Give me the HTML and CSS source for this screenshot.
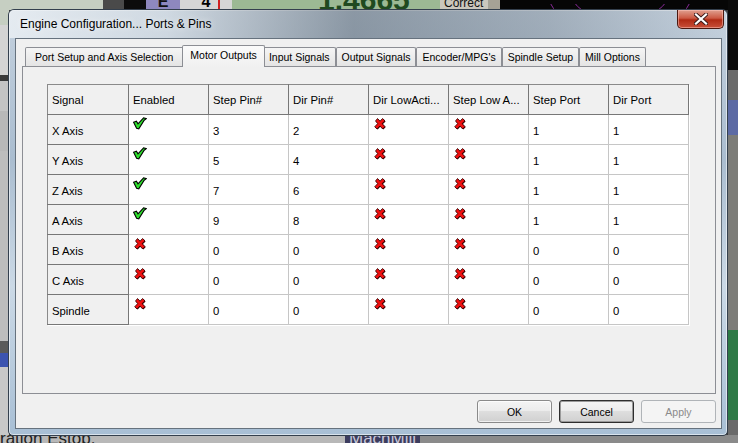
FILE: index.html
```html
<!DOCTYPE html>
<html lang="en">
<head>
    <meta charset="UTF-8">
    <title>Engine Configuration... Ports &amp; Pins</title>
    <link rel="stylesheet" href="styles.css">
</head>
<body>

    <svg class="defs" width="0" height="0">
        <symbol id="ok" viewBox="0 0 14 13">
            <path d="M0.6,5.2 L3.4,4.2 L5,6.8 L10.6,0.8 L13.4,1.6 L11.2,3.2 L5.8,11.8 L3.6,11.2 Z" fill="#2ee02e" stroke="#000" stroke-width="1.1" stroke-linejoin="miter"/>
        </symbol>
        <symbol id="no" viewBox="0 0 13 13">
            <path d="M2,4 L4,1.5 L6.5,4.2 L9,1.5 L11.5,3.8 L8.6,6.6 L11.5,9.6 L9.2,12 L6.4,9 L3.6,12 L1.2,9.8 L4.2,6.6 Z" fill="#3a0000" transform="translate(0.6,0.6)"/>
            <path d="M2,4 L4,1.5 L6.5,4.2 L9,1.5 L11.5,3.8 L8.6,6.6 L11.5,9.6 L9.2,12 L6.4,9 L3.6,12 L1.2,9.8 L4.2,6.6 Z" fill="#f01010" stroke="#2a0000" stroke-width="0.8" stroke-linejoin="round"/>
        </symbol>
    </svg>

    <!-- whatever is behind the dialog -->
    <div class="desk">
        <div class="strip top">
            <span class="seg" style="width:103px;background:#c6cfc2"></span>
            <span class="seg" style="width:21px;background:#4a4a4a"></span>
            <span class="seg" style="width:22px;background:#0c0c0c"></span>
            <span class="seg key" style="width:34px;background:#8e88be">E</span>
            <span class="seg key light" style="width:52px;background:#d6d6d6">4<i class="redline"></i></span>
            <span class="seg big" style="width:208px;background:#9cb994">1.4665</span>
            <span class="seg small" style="width:48px;background:#cbc7bd">Correct</span>
            <span class="seg" style="width:12px;background:#a6a296"></span>
            <span class="seg scope" style="width:238px;background:#060606">
                <svg width="238" height="10"><circle cx="120" cy="-40" r="60" fill="none" stroke="#8a2a9a" stroke-width="1"/><circle cx="120" cy="-40" r="80" fill="none" stroke="#8a2a9a" stroke-width="1"/><line x1="229" y1="0" x2="229" y2="10" stroke="#c02020"/></svg>
            </span>
        </div>
        <div class="strip left">
            <span style="height:15px;background:#c6cfc2"></span>
            <span style="height:50px;background:#d4d4d4"></span>
            <span style="height:6px;background:#3a3a3a"></span>
            <span style="height:30px;background:#c4c4c4"></span>
            <span style="height:40px;background:#b8b8b8"></span>
            <span style="height:190px;background:#bdbdbd"></span>
            <span style="height:12px;background:#5a5a5a"></span>
            <span style="height:14px;background:#3c54b0"></span>
            <span style="height:86px;background:#c8c8c8"></span>
        </div>
        <div class="strip right">
            <span style="height:70px;background:#0a0a0a"></span>
            <span style="height:30px;background:#6a6a6a"></span>
            <span style="height:35px;background:#5c6aa4"></span>
            <span style="height:195px;background:#7c7c78"></span>
            <span style="height:90px;background:#2e7a46"></span>
            <span style="height:23px;background:#6a6a6a"></span>
        </div>
        <div class="strip bottom">
            <span class="seg btext" style="width:345px;background:#b8b8b8">ration Estop.</span>
            <span class="seg btext dark" style="width:75px;background:#3c3c5e">MachMill</span>
            <span class="seg" style="width:318px;background:#8a8a8a"></span>
        </div>
    </div>

    <div class="dialog">
        <div class="titlebar">
            <span class="title">Engine Configuration... Ports &amp; Pins</span>
            <button class="close">
                <svg width="14" height="12" viewBox="0 0 14 12"><path d="M2,1.5 L12,10.5 M12,1.5 L2,10.5" stroke="#3a1a1a" stroke-width="4" stroke-linecap="square"/><path d="M2,1.5 L12,10.5 M12,1.5 L2,10.5" stroke="#fff" stroke-width="2.2" stroke-linecap="square"/></svg>
            </button>
        </div>

        <div class="client">
            <div class="tabs">
                <div class="tab">Port Setup and Axis Selection</div>
                <div class="tab active">Motor Outputs</div>
                <div class="tab">Input Signals</div>
                <div class="tab">Output Signals</div>
                <div class="tab">Encoder/MPG's</div>
                <div class="tab">Spindle Setup</div>
                <div class="tab">Mill Options</div>
            </div>

            <div class="page">
                <table class="grid">
                    <colgroup>
                        <col class="c-first">
                        <col><col><col><col><col><col><col>
                    </colgroup>
                    <thead>
                        <tr>
                            <th>Signal</th>
                            <th>Enabled</th>
                            <th>Step Pin#</th>
                            <th>Dir Pin#</th>
                            <th>Dir LowActi...</th>
                            <th>Step Low A...</th>
                            <th>Step Port</th>
                            <th>Dir Port</th>
                        </tr>
                    </thead>
                    <tbody>
                        <tr>
                            <th>X Axis</th>
                            <td class="ic"><svg><use href="#ok"/></svg></td>
                            <td>3</td><td>2</td>
                            <td class="ic"><svg><use href="#no"/></svg></td>
                            <td class="ic"><svg><use href="#no"/></svg></td>
                            <td>1</td><td>1</td>
                        </tr>
                        <tr>
                            <th>Y Axis</th>
                            <td class="ic"><svg><use href="#ok"/></svg></td>
                            <td>5</td><td>4</td>
                            <td class="ic"><svg><use href="#no"/></svg></td>
                            <td class="ic"><svg><use href="#no"/></svg></td>
                            <td>1</td><td>1</td>
                        </tr>
                        <tr>
                            <th>Z Axis</th>
                            <td class="ic"><svg><use href="#ok"/></svg></td>
                            <td>7</td><td>6</td>
                            <td class="ic"><svg><use href="#no"/></svg></td>
                            <td class="ic"><svg><use href="#no"/></svg></td>
                            <td>1</td><td>1</td>
                        </tr>
                        <tr>
                            <th>A Axis</th>
                            <td class="ic"><svg><use href="#ok"/></svg></td>
                            <td>9</td><td>8</td>
                            <td class="ic"><svg><use href="#no"/></svg></td>
                            <td class="ic"><svg><use href="#no"/></svg></td>
                            <td>1</td><td>1</td>
                        </tr>
                        <tr>
                            <th>B Axis</th>
                            <td class="ic"><svg><use href="#no"/></svg></td>
                            <td>0</td><td>0</td>
                            <td class="ic"><svg><use href="#no"/></svg></td>
                            <td class="ic"><svg><use href="#no"/></svg></td>
                            <td>0</td><td>0</td>
                        </tr>
                        <tr>
                            <th>C Axis</th>
                            <td class="ic"><svg><use href="#no"/></svg></td>
                            <td>0</td><td>0</td>
                            <td class="ic"><svg><use href="#no"/></svg></td>
                            <td class="ic"><svg><use href="#no"/></svg></td>
                            <td>0</td><td>0</td>
                        </tr>
                        <tr>
                            <th>Spindle</th>
                            <td class="ic"><svg><use href="#no"/></svg></td>
                            <td>0</td><td>0</td>
                            <td class="ic"><svg><use href="#no"/></svg></td>
                            <td class="ic"><svg><use href="#no"/></svg></td>
                            <td>0</td><td>0</td>
                        </tr>
                    </tbody>
                </table>
            </div>

            <div class="actions">
                <button class="btn">OK</button>
                <button class="btn default">Cancel</button>
                <button class="btn" disabled>Apply</button>
            </div>
        </div>
    </div>

</body>
</html>
```

FILE: styles.css
```css
* { box-sizing: border-box; }

body {
    margin: 0;
    width: 738px;
    height: 443px;
    position: relative;
    overflow: hidden;
    background: #3a3a3a;
    font-family: "Liberation Sans", Arial, sans-serif;
}
.defs { position: absolute; }

/* background app, only the edges show */
.desk { position: absolute; inset: 0; }
.strip { position: absolute; display: flex; overflow: hidden; }
.strip.top { left: 0; top: 0; width: 738px; height: 10px; }
.strip.left { left: 0; top: 10px; width: 9px; height: 433px; flex-direction: column; }
.strip.right { left: 728px; top: 0; width: 10px; height: 443px; flex-direction: column; }
.strip.bottom { left: 0; top: 435px; width: 738px; height: 8px; }
.strip span { flex: none; display: block; }
.seg { height: 100%; position: relative; overflow: hidden; }
.key { font: bold 16px "Liberation Sans", sans-serif; line-height: 4px; text-align: center; color: #111; }
.key.light { color: #000; }
.redline { position: absolute; left: 38px; top: 0; width: 2px; height: 10px; background: #d02020; }
.big { font: bold 30px "Liberation Sans", sans-serif; line-height: 0; padding: 0 0 0 86px; color: #1f4a1f; }
.small { font-size: 12px; line-height: 6px; padding-left: 4px; color: #111; }
.btext { font-size: 17px; line-height: 8px; color: #222; }
.btext.dark { color: #c8c8d8; padding-left: 4px; }

/* dialog window */
.dialog {
    position: absolute;
    left: 8px;
    top: 9px;
    width: 720px;
    height: 427px;
    display: flex;
    flex-direction: column;
    border: 1px solid #34404e;
    border-radius: 6px 6px 5px 5px;
    background: linear-gradient(180deg, #c4d1de 0%, #aabdd0 35%, #cbd9e6 65%, #a8bfd5 100%);
    box-shadow: inset 0 0 0 1px rgba(255, 255, 255, 0.55);
}
.titlebar {
    height: 28px;
    flex: none;
    display: flex;
    align-items: flex-start;
    padding-left: 11px;
    border-radius: 5px 5px 0 0;
    background: linear-gradient(90deg, rgba(240, 244, 247, 0.75) 0%, rgba(215, 222, 228, 0.6) 22%, rgba(70, 82, 94, 0.45) 48%, rgba(96, 108, 120, 0.35) 75%, rgba(200, 210, 220, 0.2) 100%);
}
.title {
    margin-top: 6px;
    font-size: 12px;
    line-height: 16px;
    color: #000;
    text-shadow: 0 0 6px rgba(255, 255, 255, 0.9);
}
.close {
    margin-left: auto;
    margin-right: 3px;
    width: 47px;
    height: 19px;
    padding: 0;
    display: flex;
    align-items: center;
    justify-content: center;
    border: 1px solid #4a1810;
    border-top: 0;
    border-radius: 0 0 5px 5px;
    background: linear-gradient(180deg, #e0a090 0%, #cc5a44 45%, #b02a14 55%, #c8503a 100%);
    box-shadow: inset 0 0 0 1px rgba(255, 200, 190, 0.5);
}

.client {
    flex: 1;
    margin: 0 5px 6px 6px;
    padding: 6px 5px 0 6px;
    border: 1px solid #66727e;
    background: #f0f0f0;
}

/* tabs */
.tabs {
    height: 21px;
    display: flex;
    align-items: flex-end;
    padding-left: 3px;
}
.tab {
    height: 19px;
    padding: 0 5px;
    border: 1px solid #8c8e94;
    border-bottom: 0;
    border-radius: 2px 2px 0 0;
    background: linear-gradient(180deg, #f5f5f5, #e4e4e4);
    font-size: 10.5px;
    line-height: 18px;
    color: #000;
    white-space: nowrap;
}
.tab:first-child { padding: 0 10px 0 9px; }
.tab.active {
    position: relative;
    z-index: 1;
    height: 22px;
    margin: 0 -2px -1px;
    padding: 0 7px;
    line-height: 19px;
    background: linear-gradient(180deg, #fbfbfb, #f0f0f0);
}
.page {
    height: 328px;
    padding: 17px 0 0 24px;
    border: 1px solid #8c8e94;
    background: #f0f0f0;
}

/* grid */
.grid {
    table-layout: fixed;
    width: 641px;
    border-collapse: collapse;
    border: 1px solid #8a8a8a;
    box-shadow: 1px 1px 0 #fff;
    font-size: 11.3px;
    color: #000;
}
.grid col { width: 80px; }
.grid col.c-first { width: 81px; }
.grid th,
.grid td {
    padding: 2px 0 0 4px;
    text-align: left;
    font-weight: normal;
    white-space: nowrap;
    overflow: hidden;
}
.grid th {
    background: #f0f0f0;
    border-right: 1px solid #777;
    border-bottom: 1px solid #777;
}
.grid thead tr { height: 30px; }
.grid thead th { padding-top: 0; }
.grid tbody tr { height: 30px; }
.grid td {
    background: #fff;
    border-right: 1px solid #c6c6c6;
    border-bottom: 1px solid #c6c6c6;
}
.grid td.ic {
    vertical-align: top;
    padding: 2px 0 0 4px;
}
.grid td.ic svg { display: block; width: 14px; height: 13px; }

/* buttons */
.actions {
    display: flex;
    justify-content: flex-end;
    gap: 7px;
    margin-top: 6px;
}
.btn {
    width: 75px;
    height: 23px;
    padding: 0;
    border: 1px solid #8a8a8a;
    border-radius: 3px;
    background: linear-gradient(180deg, #f4f4f4 0%, #ebebeb 50%, #dedede 50%, #d0d0d0 100%);
    box-shadow: inset 0 0 0 1px rgba(255, 255, 255, 0.7);
    font-family: "Liberation Sans", Arial, sans-serif;
    font-size: 10.5px;
    color: #000;
}
.btn.default {
    border-color: #2e2e2e;
    box-shadow: inset 0 0 0 1px #9a9a9a;
}
.btn:disabled {
    border-color: #b0b4b8;
    background: #f4f4f4;
    box-shadow: none;
    color: #8a8a8a;
}
```
